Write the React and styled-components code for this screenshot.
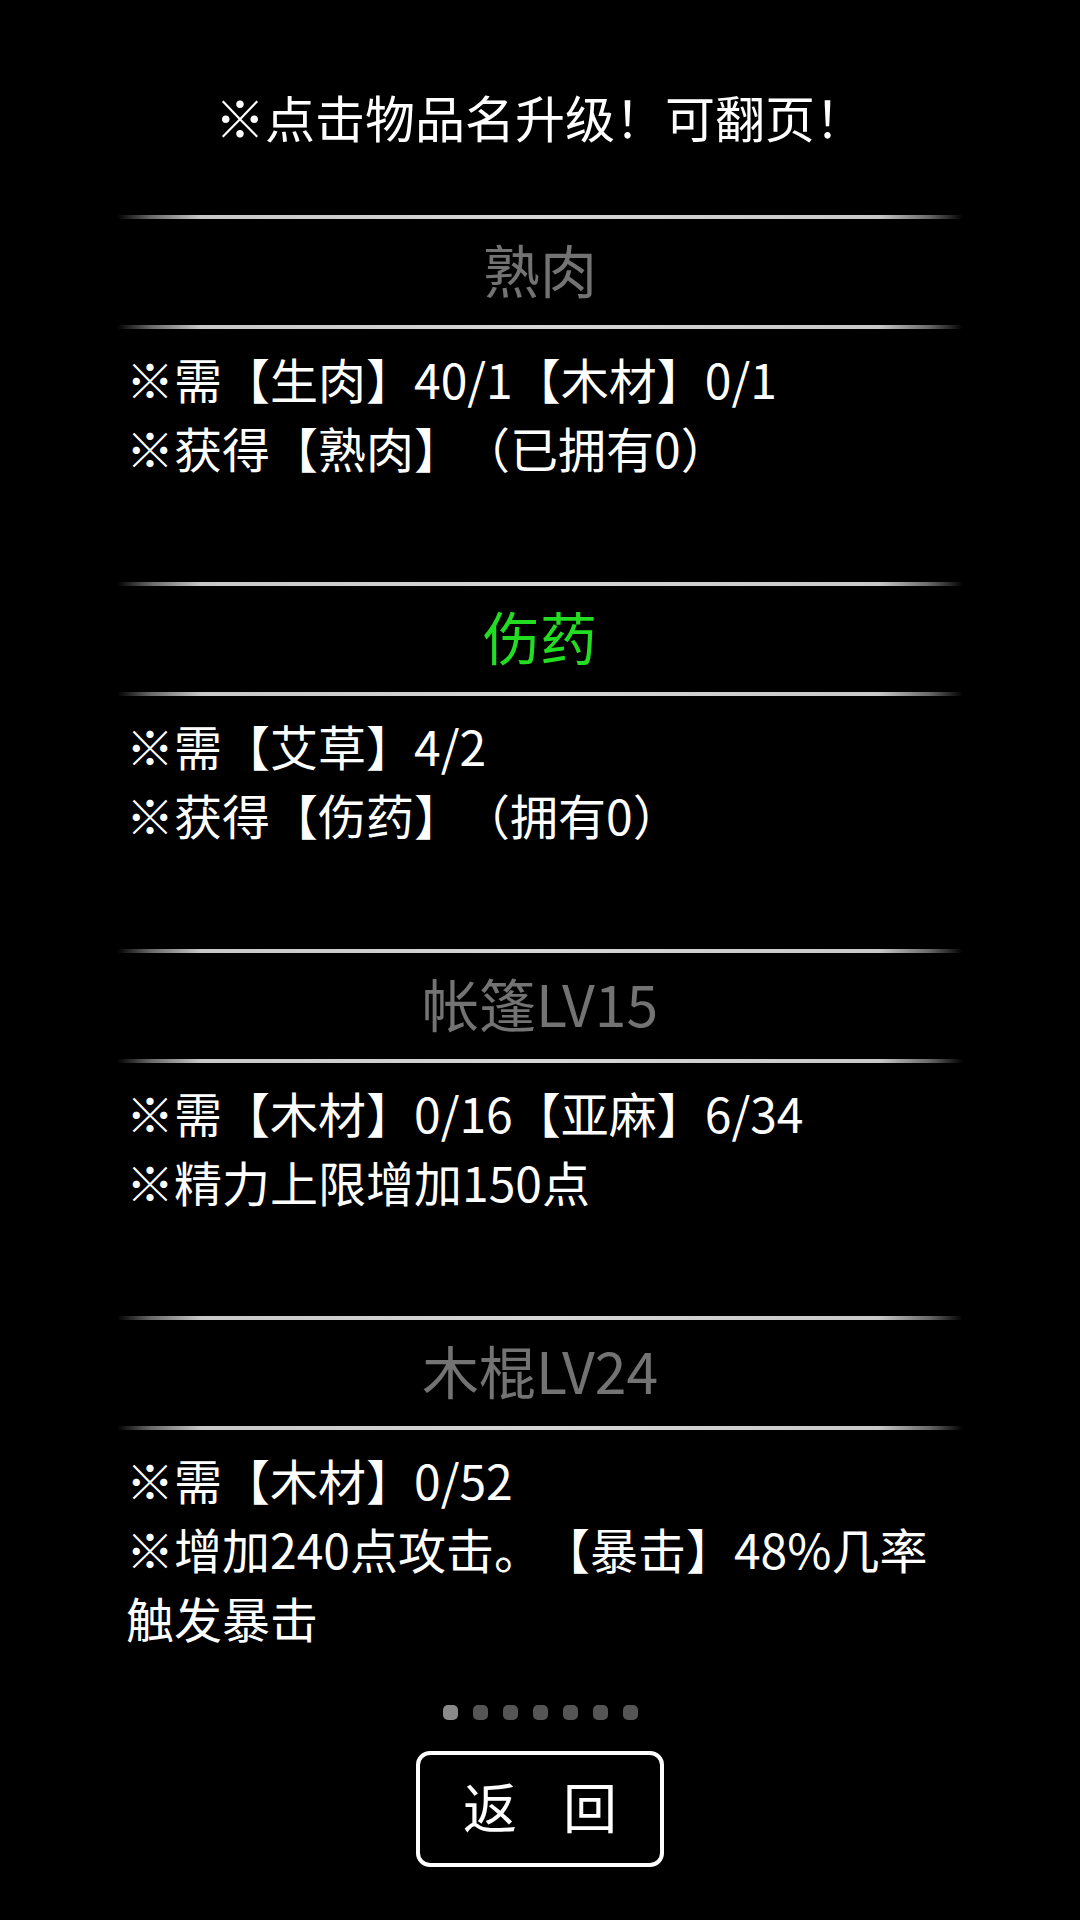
import React from "react";
import styled, { createGlobalStyle } from "styled-components";

const items = [
    {
        name: "熟肉",
        active: false,
        lines: ["※需【生肉】40/1【木材】0/1", "※获得【熟肉】（已拥有0）"],
    },
    {
        name: "伤药",
        active: true,
        lines: ["※需【艾草】4/2", "※获得【伤药】（拥有0）"],
    },
    {
        name: "帐篷LV15",
        active: false,
        lines: ["※需【木材】0/16【亚麻】6/34", "※精力上限增加150点"],
    },
    {
        name: "木棍LV24",
        active: false,
        lines: ["※需【木材】0/52", "※增加240点攻击。【暴击】48%几率触发暴击"],
    },
];

const App = () => {
    const page = 0;

    return (
        <>
            <GlobalStyle />
            <Screen>
                <Hint>※点击物品名升级！可翻页！</Hint>
                <ItemList>
                    {items.map((item) => (
                        <ItemBlock key={item.name}>
                            <Divider />
                            <ItemName $active={item.active}>{item.name}</ItemName>
                            <Divider />
                            <ItemInfo>
                                {item.lines.map((line) => (
                                    <p key={line}>{line}</p>
                                ))}
                            </ItemInfo>
                        </ItemBlock>
                    ))}
                </ItemList>
                <Pager>
                    {[0, 1, 2, 3, 4, 5, 6].map((i) => (
                        <Dot key={i} $current={i === page} />
                    ))}
                </Pager>
                <BackButton type="button">
                    <span>返</span>
                    <span>回</span>
                </BackButton>
            </Screen>
        </>
    );
};

const GlobalStyle = createGlobalStyle`
  html, body {
    margin: 0;
    padding: 0;
    background: #000;
  }
  body {
    font-family: "Noto Sans CJK SC", "Noto Sans", sans-serif;
    color: #fff;
    text-spacing-trim: space-all;
  }
`;

const Screen = styled.main`
    box-sizing: border-box;
    width: 1080px;
    min-height: 1920px;
    padding-top: 82px;
    background: #000;
    display: flex;
    flex-direction: column;
    align-items: center;
`;

const Hint = styled.h1`
    margin: 0;
    font-size: 50px;
    font-weight: 400;
    line-height: 68px;
    color: #fff;
    text-align: center;
`;

const ItemList = styled.section`
    width: 846px;
    margin-top: 65px;
    display: flex;
    flex-direction: column;
    gap: 100px;
`;

const ItemBlock = styled.article`
    display: flex;
    flex-direction: column;
`;

const Divider = styled.div`
    height: 4px;
    width: 100%;
    background: linear-gradient(
        to right,
        rgba(200, 200, 200, 0) 0%,
        rgba(190, 190, 190, 0.55) 4%,
        #c8c8c8 10%,
        #d6d6d6 50%,
        #c8c8c8 90%,
        rgba(190, 190, 190, 0.55) 96%,
        rgba(200, 200, 200, 0) 100%
    );
    border-radius: 2px;
`;

const ItemName = styled.h2`
    box-sizing: border-box;
    margin: 0;
    height: 106px;
    padding-bottom: 9px;
    display: flex;
    align-items: center;
    justify-content: center;
    font-size: 57px;
    font-weight: 400;
    color: ${(p) => (p.$active ? "#22dd22" : "#737373")};
`;

const ItemInfo = styled.div`
    padding: 15px 0 0 9px;
    p {
        margin: 0;
        font-size: 48px;
        line-height: 69px;
        color: #fff;
    }
`;

const Pager = styled.div`
    margin-top: 53px;
    display: flex;
    gap: 15px;
`;

const Dot = styled.span`
    width: 15px;
    height: 15px;
    border-radius: 5px;
    background: ${(p) => (p.$current ? "#8a8a8a" : "#555")};
`;

const BackButton = styled.button`
    box-sizing: border-box;
    margin-top: 31px;
    width: 248px;
    height: 116px;
    border: 4px solid #fff;
    border-radius: 14px;
    background: #000;
    color: #fff;
    display: flex;
    align-items: center;
    justify-content: center;
    gap: 46px;
    font-family: "Noto Sans CJK SC", sans-serif;
    font-size: 54px;
    line-height: 1;
    padding: 0 0 6px;
`;

export default App;
